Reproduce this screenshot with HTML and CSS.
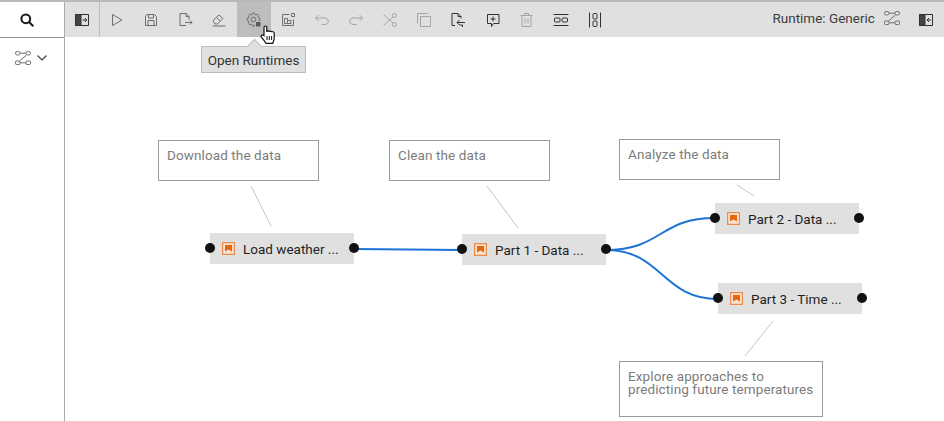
FILE: index.html
```html
<!DOCTYPE html>
<html>
	<head>
		<title>Pipeline editor</title>
		<link rel="stylesheet" href="styles.css">
	</head>
	<body>
		<div class="app">
			<div class="sidebar">
				<div class="search-cell">
					<svg class="search-icon" width="16" height="16" viewBox="0 0 16 16"><circle cx="6.800" cy="6.800" r="4.400"/><path d="M10 10l4.300 4.300"/></svg>
				</div>
				<div class="pipeline-tab">
					<svg class="icon" width="16" height="16" viewBox="0 0 16 16"><rect x="0.500" y="1.500" width="4.500" height="3.500" rx="1.700"/><rect x="11" y="1.500" width="4.500" height="3.500" rx="1.700"/><rect x="0.500" y="11" width="4.500" height="3.500" rx="1"/><rect x="11" y="11" width="4.500" height="3.500" rx="1"/><path d="M5 3.200h6M11.500 5l-7 6M5 12.800h6"/></svg>
					<svg class="chevron" width="10" height="6" viewBox="0 0 10 6"><path d="M0.500 0.500l4.500 4.500 4.500-4.500"/></svg>
				</div>
			</div>
			<div class="workspace">
				<div class="toolbar">
					<button class="tool divided">
						<svg class="icon dark" width="16" height="16" viewBox="0 0 16 16"><rect x="1.500" y="2.500" width="13" height="11"/><rect class="fill" x="1.500" y="2.500" width="5.500" height="11"/><path d="M8.500 8h4M10.800 6l2 2-2 2"/></svg>
					</button>
					<button class="tool">
						<svg class="icon" width="16" height="16" viewBox="0 0 16 16"><path d="M3.500 2.500v11L13 8z"/></svg>
					</button>
					<button class="tool">
						<svg class="icon" width="16" height="16" viewBox="0 0 16 16"><path d="M2.500 4l1.500-1.500h7.500l2 2v9h-11z"/><path d="M5.500 2.500v3.500h5v-3.500M5 13.500v-5h6v5"/></svg>
					</button>
					<button class="tool">
						<svg class="icon" width="16" height="16" viewBox="0 0 16 16"><path d="M9 13.500h-6v-12h6l3 3v3M9 1.500v3h3M8 10.500h7M13 8.500l2 2-2 2"/></svg>
					</button>
					<button class="tool">
						<svg class="icon" width="16" height="16" viewBox="0 0 16 16"><path d="M2 8.500l6-5.500 4 3.500-5.500 5.500h-2.500zM5.500 5.500l4 3.500M1.500 14h13"/></svg>
					</button>
					<button class="tool active">
						<svg class="icon" width="16" height="16" viewBox="0 0 16 16"><polygon points="12.200,5.800 14,6.500 14,8.500 12.200,9.200 12,9.600 12.760,11.320 11.320,12.760 9.600,12 9.200,12.200 8.500,14 6.500,14 5.800,12.200 5.400,12 3.680,12.760 2.240,11.320 3,9.600 2.800,9.200 1,8.500 1,6.500 2.800,5.800 3,5.400 2.240,3.680 3.680,2.240 5.400,3 5.800,2.800 6.500,1 8.500,1 9.200,2.800 9.600,3 11.320,2.240 12.760,3.680 12,5.400"/><circle cx="7.500" cy="7.500" r="2.300"/><rect class="badge" x="9.500" y="9.500" width="5.500" height="5.500"/></svg>
					</button>
					<button class="tool">
						<svg class="icon" width="16" height="16" viewBox="0 0 16 16"><path d="M9.500 2.500h-7v11h11v-6M4.500 6.500h3v5h-3zM7.500 8.500h3.500v3h-3.500z"/><rect x="11.500" y="1.500" width="3" height="3"/></svg>
					</button>
					<button class="tool off">
						<svg class="icon" width="16" height="16" viewBox="0 0 16 16"><path d="M1.500 6h9c5 0 5 6.500 0 6.500h-3M4.500 3l-3 3 3 3"/></svg>
					</button>
					<button class="tool off">
						<svg class="icon" width="16" height="16" viewBox="0 0 16 16"><path d="M14.500 6h-9c-5 0-5 6.500 0 6.500h3M11.500 3l3 3-3 3"/></svg>
					</button>
					<button class="tool off">
						<svg class="icon" width="16" height="16" viewBox="0 0 16 16"><circle cx="12.500" cy="3.500" r="2"/><circle cx="12.500" cy="12.500" r="2"/><path d="M1.500 2.500l9.500 8.500M1.500 13.500l9.500-8.500"/></svg>
					</button>
					<button class="tool off">
						<svg class="icon" width="16" height="16" viewBox="0 0 16 16"><rect x="4.500" y="4.500" width="10" height="10"/><path d="M1.500 11.500v-10h10"/></svg>
					</button>
					<button class="tool">
						<svg class="icon dark" width="16" height="16" viewBox="0 0 16 16"><path d="M5 13.500h-3v-12h6l3 3v2M8 1.500v3h3M15 10.500h-8M9.500 8l-2.500 2.500 2.500 2.500h3v2"/></svg>
					</button>
					<button class="tool">
						<svg class="icon dark" width="16" height="16" viewBox="0 0 16 16"><path d="M2.500 2.500h11.500v9h-5.500l-2 3v-3h-4zM8 4.500v5M5.500 7h5"/></svg>
					</button>
					<button class="tool off">
						<svg class="icon" width="16" height="16" viewBox="0 0 16 16"><path d="M1.500 3.500h12M5.500 3.500v-2h4v2M3 3.500v11h9v-11M6 6.500v5M9 6.500v5"/></svg>
					</button>
					<button class="tool">
						<svg class="icon dark" width="16" height="16" viewBox="0 0 16 16"><path d="M0.500 2.500h15M0.500 13.500h15"/><rect x="1.500" y="6" width="5.500" height="4" rx="1"/><rect x="9" y="6" width="5.500" height="4" rx="1"/></svg>
					</button>
					<button class="tool">
						<svg class="icon dark" width="16" height="16" viewBox="0 0 16 16"><path d="M2.500 0.500v15M13.500 0.500v15"/><rect x="6" y="1.500" width="4" height="5.500" rx="1"/><rect x="6" y="9" width="4" height="5.500" rx="1"/></svg>
					</button>
					<div class="runtime">
						<span class="runtime-label">Runtime: Generic</span>
						<svg class="icon" width="16" height="16" viewBox="0 0 16 16"><rect x="0.500" y="1.500" width="4.500" height="3.500" rx="1.700"/><rect x="11" y="1.500" width="4.500" height="3.500" rx="1.700"/><rect x="0.500" y="11" width="4.500" height="3.500" rx="1"/><rect x="11" y="11" width="4.500" height="3.500" rx="1"/><path d="M5 3.200h6M11.500 5l-7 6M5 12.800h6"/></svg>
					</div>
					<button class="tool last">
						<svg class="icon dark" width="16" height="16" viewBox="0 0 16 16"><rect x="1.500" y="2.500" width="13" height="11"/><rect class="fill" x="1.500" y="2.500" width="5.500" height="11"/><path d="M13 8h-4M11 6l-2 2 2 2"/></svg>
					</button>
				</div>

				<div class="canvas">
					<svg class="links" width="879" height="384" viewBox="65 37 879 384">
						<path class="comment-link" d="M251 186L271 226"/>
						<path class="comment-link" d="M487 186L518 228"/>
						<path class="comment-link" d="M737 185L754 196"/>
						<path class="comment-link" d="M773 321L745 356"/>
						<path class="node-link" d="M354 249L462 250"/>
						<path class="node-link" d="M606 250C662 250 659 218 715 218"/>
						<path class="node-link" d="M606 250C662 250 662 299 718 299"/>
					</svg>

					<div class="comment c1">Download the data</div>
					<div class="comment c2">Clean the data</div>
					<div class="comment c3">Analyze the data</div>
					<div class="comment c4">Explore approaches to<br>predicting future temperatures</div>

					<div class="node n1">
						<svg class="node-icon" width="13" height="13" viewBox="0 0 13 13"><rect class="frame" x="0.600" y="0.600" width="11.800" height="11.800"/><path class="mark" d="M3 3h7v6.500l-3.500-2-3.500 2z"/></svg>
						<span>Load weather ...</span>
					</div>
					<div class="node n2">
						<svg class="node-icon" width="13" height="13" viewBox="0 0 13 13"><rect class="frame" x="0.600" y="0.600" width="11.800" height="11.800"/><path class="mark" d="M3 3h7v6.500l-3.500-2-3.500 2z"/></svg>
						<span>Part 1 - Data ...</span>
					</div>
					<div class="node n3">
						<svg class="node-icon" width="13" height="13" viewBox="0 0 13 13"><rect class="frame" x="0.600" y="0.600" width="11.800" height="11.800"/><path class="mark" d="M3 3h7v6.500l-3.500-2-3.500 2z"/></svg>
						<span>Part 2 - Data ...</span>
					</div>
					<div class="node n4">
						<svg class="node-icon" width="13" height="13" viewBox="0 0 13 13"><rect class="frame" x="0.600" y="0.600" width="11.800" height="11.800"/><path class="mark" d="M3 3h7v6.500l-3.500-2-3.500 2z"/></svg>
						<span>Part 3 - Time ...</span>
					</div>

					<div class="tooltip">Open Runtimes</div>

					<svg class="hand" width="16" height="20" viewBox="0 0 16 20"><path d="M4 10.500V2.500c0-2 2.800-2 2.800 0V7c0-1.500 2.600-1.500 2.600 0 0-1.200 2.400-1.200 2.400.3 0-1 2.400-.8 2.400 .8v5.400c0 2-1 3-1.500 4.800H6c-1-2-2.500-3.500-4.500-6-1.200-1.800 1-3.200 2.500-1.800z"/><path class="stripes" d="M7 11v4M9.300 11v4M11.600 11v4"/></svg>
				</div>
			</div>
		</div>
	</body>
</html>
```

FILE: styles.css
```css
* {
	box-sizing: border-box;
}

body {
	margin: 0;
	background-color: white;
	font-family: "Roboto", "Liberation Sans", sans-serif;
}

.app {
	display: flex;
	height: 421px;
	border-top: 2px solid #b9b9b9;
	overflow: hidden;
}

.sidebar {
	width: 65px;
	flex-shrink: 0;
	border-right: 1px solid #ababab;
}

.search-cell {
	display: flex;
	justify-content: center;
	align-items: center;
	height: 36px;
	border-bottom: 1px solid #8f8f8f;
	padding-right: 11px;
}

.search-icon {
	fill: none;
	stroke: #161616;
	stroke-width: 2;
}

.pipeline-tab {
	display: flex;
	align-items: center;
	gap: 6px;
	height: 40px;
	padding-left: 15px;
}

.chevron {
	fill: none;
	stroke: #444;
	stroke-width: 1.2;
}

.workspace {
	flex: 1;
	display: flex;
	flex-direction: column;
	min-width: 0;
}

.toolbar {
	display: flex;
	align-items: stretch;
	height: 35px;
	flex-shrink: 0;
	background-color: #e0e0e0;
}

.tool {
	display: flex;
	justify-content: center;
	align-items: center;
	width: 34.15px;
	padding: 0;
	border: none;
	background: none;
}

.tool.divided {
	width: 35px;
	border-right: 1px solid #bdbdbd;
}

.tool.active {
	background-color: #bdbdbd;
}

.tool.last {
	margin-right: 1px;
}

.icon {
	fill: none;
	stroke: #6f6f6f;
	stroke-width: 1;
	stroke-linejoin: round;
}

.icon .fill {
	fill: #444;
}

.icon .badge {
	fill: #5a5a5a;
	stroke: #bdbdbd;
}

.icon.dark {
	stroke: #333;
}

.off .icon {
	stroke: #a4a4a4;
}

.runtime {
	display: flex;
	align-items: center;
	gap: 9px;
	margin-left: auto;
	margin-right: 9px;
	padding-bottom: 3px;
}

.runtime-label {
	font-size: 13.5px;
	color: #3c3c3c;
}

.canvas {
	position: relative;
	flex: 1;
}

.links {
	position: absolute;
	left: 0;
	top: 0;
	fill: none;
}

.comment-link {
	stroke: #c4c4c4;
	stroke-width: 1;
}

.node-link {
	stroke: #1d74d6;
	stroke-width: 2;
}

.comment {
	position: absolute;
	width: 161px;
	height: 41px;
	padding: 8px;
	border: 1px solid #9a9a9a;
	background-color: white;
	color: #7c7c7c;
	font-size: 13.5px;
	line-height: 13px;
	letter-spacing: 0.1px;
	white-space: nowrap;
}

.c1 {
	left: 93px;
	top: 103px;
}

.c2 {
	left: 324px;
	top: 103px;
}

.c3 {
	left: 554px;
	top: 102px;
}

.c4 {
	left: 554px;
	top: 324px;
	width: 204px;
	height: 56px;
}

.node {
	position: absolute;
	display: flex;
	align-items: center;
	gap: 8px;
	width: 144px;
	height: 31px;
	padding-left: 12px;
	background-color: #e0e0e0;
	color: #1f1f1f;
	font-size: 13.5px;
}

.node::before,
.node::after {
	content: "";
	position: absolute;
	top: 10px;
	width: 10px;
	height: 10px;
	border-radius: 50%;
	background-color: #111;
}

.node::before {
	left: -5px;
}

.node::after {
	right: -5px;
}

.node-icon {
	flex-shrink: 0;
}

.frame {
	fill: #f6e3d4;
	stroke: #ee8a45;
	stroke-width: 1.2;
}

.mark {
	fill: #e8660c;
}

.n1 {
	left: 145px;
	top: 196px;
}

.n2 {
	left: 397px;
	top: 197px;
}

.n3 {
	left: 650px;
	top: 166px;
}

.n4 {
	left: 653px;
	top: 246px;
}

.tooltip {
	position: absolute;
	left: 136px;
	top: 9px;
	width: 105px;
	height: 27px;
	border: 1px solid #bdbdbd;
	background-color: #e0e0e0;
	color: #333;
	font-size: 13.5px;
	line-height: 26px;
	text-align: center;
}

.tooltip::before {
	content: "";
	position: absolute;
	left: 47px;
	top: -6px;
	width: 10px;
	height: 10px;
	border-left: 1px solid #bdbdbd;
	border-top: 1px solid #bdbdbd;
	background-color: #e0e0e0;
	transform: rotate(45deg);
}

.hand {
	position: absolute;
	left: 195px;
	top: -12px;
}

.hand path {
	fill: white;
	stroke: #111;
	stroke-width: 1.2;
}

.hand .stripes {
	fill: none;
	stroke-width: 1;
}
```
